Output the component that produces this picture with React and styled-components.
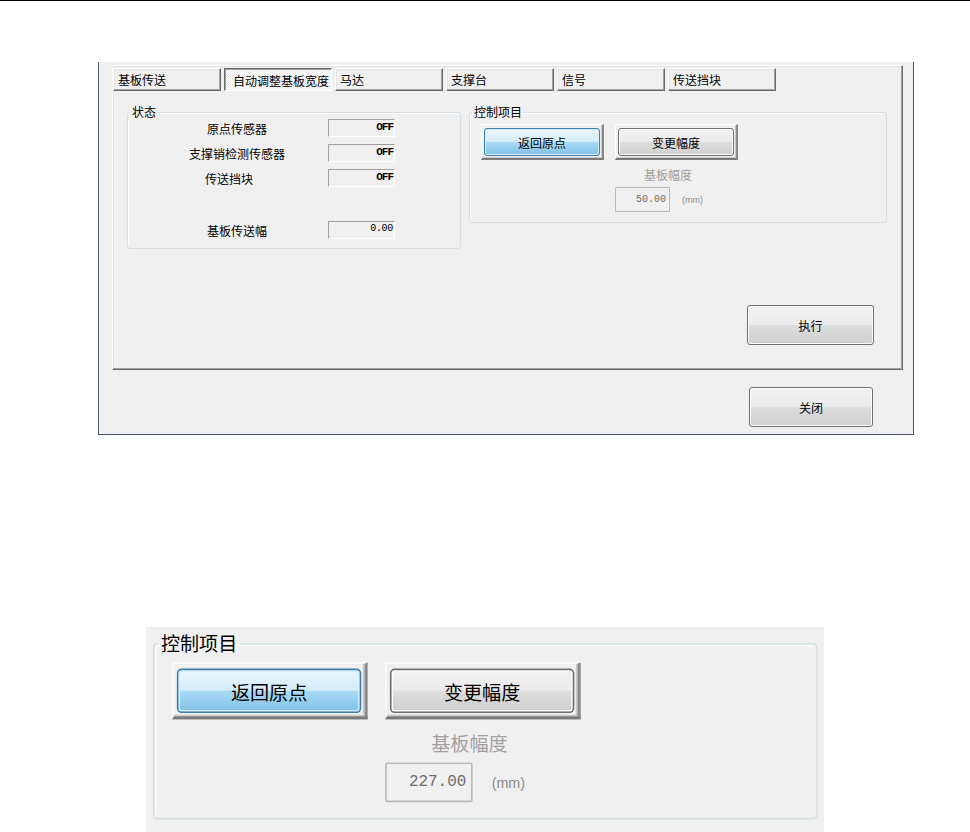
import React from 'react'
import styled, { createGlobalStyle } from 'styled-components'

const GlobalStyle = createGlobalStyle`
  html, body {
    margin: 0;
    padding: 0;
    background: #fff;
  }
  body {
    font-family: "Noto Sans CJK SC", "Liberation Sans", sans-serif;
    font-size: 12px;
    color: #000;
  }
`

const tabs = ['基板传送', '自动调整基板宽度', '马达', '支撑台', '信号', '传送挡块']

const statusRows = [
  { label: '原点传感器', value: 'OFF', bold: true },
  { label: '支撑销检测传感器', value: 'OFF', bold: true },
  { label: '传送挡块', value: 'OFF', bold: true, nudge: 16 },
  { label: '基板传送幅', value: '0.00', gap: 34 },
]

const TopRule = styled.div`
  height: 1px;
  background: #000;
`

const Window = styled.div`
  box-sizing: border-box;
  margin: 61px 0 0 98px;
  width: 816px;
  height: 373px;
  padding: 3px 10px 7px 13px;
  background: #f0f0f0;
  border: 1px solid #48556a;
  border-top: none;
  display: flex;
  flex-direction: column;
`

const Panel = styled.div`
  box-sizing: border-box;
  height: 305px;
  border: 1px solid;
  border-color: #fff #696969 #696969 #fff;
  box-shadow: inset -1px -1px 0 #a0a0a0, inset 1px 1px 0 #e3e3e3;
  display: flex;
  flex-direction: column;
`

const TabBar = styled.div`
  display: flex;
  gap: 3px;
  padding-top: 2px;
`

const Tab = styled.div`
  box-sizing: border-box;
  width: 108px;
  height: 23px;
  display: flex;
  align-items: center;
  padding-left: ${({ $active }) => ($active ? '8px' : '4px')};
  padding-top: ${({ $active }) => ($active ? '2px' : '0')};
  border: 1px solid;
  border-color: ${({ $active }) =>
    $active ? '#696969 #fff #fff #696969' : '#fff #696969 #696969 #fff'};
  box-shadow: ${({ $active }) =>
    $active
      ? 'inset 1px 1px 0 #a0a0a0'
      : 'inset -1px -1px 0 #a0a0a0, inset 1px 1px 0 #e3e3e3'};
  background: ${({ $active }) =>
    $active
      ? 'repeating-conic-gradient(#fdfdfd 0 25%, #ececec 0 50%) 0 0 / 2px 2px'
      : '#f0f0f0'};
  white-space: nowrap;
`

const GroupRow = styled.div`
  display: flex;
  align-items: flex-start;
  gap: 8px;
  margin-top: 14px;
  padding-left: 14px;
`

const Group = styled.fieldset`
  box-sizing: border-box;
  margin: 0;
  padding: 0;
  min-width: 0;
  width: ${({ $w }) => $w}px;
  border: 1px solid #d5dfe5;
  border-radius: 3px;
  box-shadow: inset 1px 1px 0 #fafcfd;
`

const Legend = styled.legend`
  margin-left: 2px;
  padding: 0 2px;
  font-size: 12px;
  line-height: 14px;
`

const StatusList = styled.div`
  display: flex;
  flex-direction: column;
  padding-bottom: 9px;
`

const StatusRow = styled.div`
  display: grid;
  grid-template-columns: 182px 67px;
  align-items: center;
  height: 18px;
  padding-left: 18px;
  margin-top: ${({ $gap }) => $gap}px;
`

const StatusLabel = styled.span`
  text-align: center;
  white-space: nowrap;
  padding-right: ${({ $nudge }) => $nudge || 0}px;
`

const Field = styled.div`
  box-sizing: border-box;
  height: 18px;
  border: 1px solid;
  border-color: #a0a0a0 #fff #fff #a0a0a0;
  display: flex;
  justify-content: flex-end;
  align-items: flex-start;
  padding: 1px 1px 0 0;
  font-family: "Liberation Mono", monospace;
  font-size: ${({ $bold }) => ($bold ? '11px' : '10px')};
  line-height: 12px;
  letter-spacing: ${({ $bold }) => ($bold ? '-1px' : '-0.3px')};
  font-weight: ${({ $bold }) => ($bold ? 700 : 400)};
`

const ControlBody = styled.div`
  padding: 5px 0 10px 11px;
`

const ButtonPair = styled.div`
  display: flex;
  gap: 11px;
`

const Frame = styled.div`
  padding: 3px 2px 2px 2px;
  border-style: solid;
  border-width: 1px 2px 2px 1px;
  border-color: #fcfcfc #8a8a8a #7a7a7a #fcfcfc;
  box-shadow: inset -1px -1px 0 #c8c8c8;
`

const WinButton = styled.button`
  box-sizing: border-box;
  width: ${({ $w }) => $w}px;
  height: ${({ $h }) => $h}px;
  margin: 0;
  padding: 0;
  border: 1px solid ${({ $primary }) => ($primary ? '#3c7fb1' : '#707070')};
  border-radius: 3px;
  background: ${({ $primary }) =>
    $primary
      ? 'linear-gradient(#eaf6fd 0%, #d4edfa 48%, #a9d9f4 52%, #7fc2e8 100%)'
      : 'linear-gradient(#f2f2f2 0%, #ebebeb 48%, #dddddd 52%, #cfcfcf 100%)'};
  box-shadow: inset 0 0 0 1px ${({ $primary }) => ($primary ? '#d8eefb' : '#fcfcfc')};
  font-family: "Noto Sans CJK SC", "Liberation Sans", sans-serif;
  font-size: 12px;
  color: #000;
`

const WidthColumn = styled.div`
  margin-left: 134px;
  display: flex;
  flex-direction: column;
  align-items: flex-start;
`

const Caption = styled.span`
  margin: 8px 0 0 29px;
  line-height: 14px;
  color: #a0a0a0;
`

const InputRow = styled.div`
  display: flex;
  align-items: center;
  gap: 12px;
  margin-top: 5px;
`

const ValueBox = styled.div`
  box-sizing: border-box;
  width: 55px;
  height: 25px;
  border: 1px solid #b9b9b9;
  border-radius: 1px;
  display: flex;
  align-items: center;
  justify-content: flex-end;
  padding-right: 3px;
  font-family: "Liberation Mono", monospace;
  font-size: 10px;
  color: #6d6d6d;
`

const Unit = styled.span`
  font-family: "Liberation Sans", sans-serif;
  font-size: 9px;
  color: #8a8a8a;
  margin-top: 1px;
`

const ActionRow = styled.div`
  margin-top: auto;
  display: flex;
  justify-content: flex-end;
  padding: 0 28px 24px 0;
`

const CloseRow = styled.div`
  display: flex;
  justify-content: flex-end;
  padding: 17px 30px 0 0;
`

const ZoomView = styled.div`
  box-sizing: border-box;
  margin: 192px 0 0 146px;
  width: 678px;
  height: 205px;
  padding: 5px 0 0 7px;
  background: #f0f0f0;
  overflow: hidden;
`

const ZoomInner = styled.div`
  width: 418px;
  transform: scale(1.59);
  transform-origin: 0 0;
`

const ControlGroup = ({ value }) => (
  <Group $w={418}>
    <Legend>控制项目</Legend>
    <ControlBody>
      <ButtonPair>
        <Frame>
          <WinButton $w={116} $h={28} $primary>返回原点</WinButton>
        </Frame>
        <Frame>
          <WinButton $w={116} $h={28}>变更幅度</WinButton>
        </Frame>
      </ButtonPair>
      <WidthColumn>
        <Caption>基板幅度</Caption>
        <InputRow>
          <ValueBox>{value}</ValueBox>
          <Unit>(mm)</Unit>
        </InputRow>
      </WidthColumn>
    </ControlBody>
  </Group>
)

const App = () => {
  return (
    <>
      <GlobalStyle />
      <TopRule />
      <Window>
        <Panel>
          <TabBar>
            {tabs.map((t, i) => (
              <Tab key={t} $active={i === 1}>{t}</Tab>
            ))}
          </TabBar>
          <GroupRow>
            <Group $w={334}>
              <Legend>状态</Legend>
              <StatusList>
                {statusRows.map((r, i) => (
                  <StatusRow key={r.label} $gap={i === 0 ? 0 : r.gap || 7}>
                    <StatusLabel $nudge={r.nudge}>{r.label}</StatusLabel>
                    <Field $bold={r.bold}>{r.value}</Field>
                  </StatusRow>
                ))}
              </StatusList>
            </Group>
            <ControlGroup value="50.00" />
          </GroupRow>
          <ActionRow>
            <WinButton $w={127} $h={40}>执行</WinButton>
          </ActionRow>
        </Panel>
        <CloseRow>
          <WinButton $w={124} $h={40}>关闭</WinButton>
        </CloseRow>
      </Window>
      <ZoomView>
        <ZoomInner>
          <ControlGroup value="227.00" />
        </ZoomInner>
      </ZoomView>
    </>
  )
}

export default App
